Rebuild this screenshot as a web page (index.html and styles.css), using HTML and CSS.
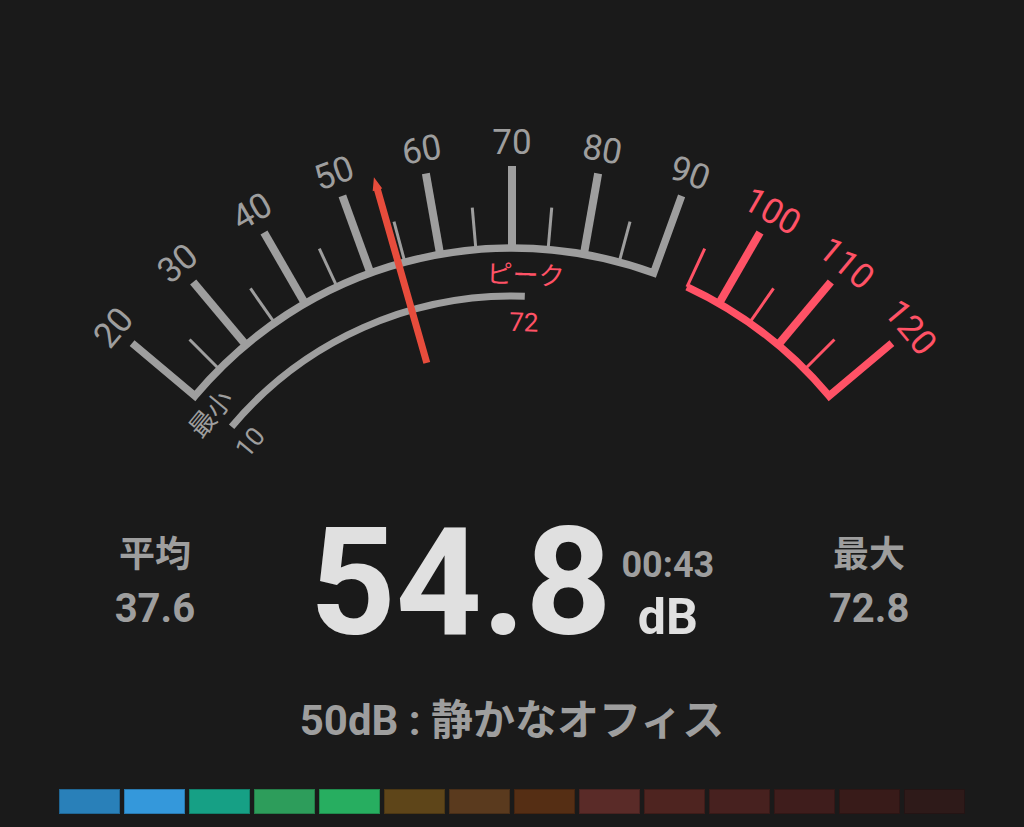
FILE: index.html
```html
<!DOCTYPE html>
<html lang="ja">
<head>
    <meta charset="UTF-8">
    <meta name="viewport" content="width=device-width, initial-scale=1.0">
    <title>騒音計</title>
    <link rel="stylesheet" href="styles.css">
</head>
<body>
    <div class="meter">
        <!-- dial: pivot at (512, 662), 1 degree per dB, 70 dB straight up -->
        <svg class="gauge" viewBox="0 0 1024 490" width="1024" height="490">
            <path class="scale" d="M132.1 343.2 L194.9 395.9 A414 414 0 0 1 653.6 273.0 L681.6 195.9"/>
            <path class="scale danger" d="M687.0 286.8 A414 414 0 0 1 829.1 395.9 L891.9 343.2"/>
            <path class="range" d="M231.6 426.7 A366 366 0 0 1 524.8 296.2"/>

            <line class="minor" x1="512" y1="248" x2="512" y2="206" transform="rotate(-45 512 662)"/>
            <line class="major" x1="512" y1="248" x2="512" y2="166" transform="rotate(-40 512 662)"/>
            <line class="minor" x1="512" y1="248" x2="512" y2="206" transform="rotate(-35 512 662)"/>
            <line class="major" x1="512" y1="248" x2="512" y2="166" transform="rotate(-30 512 662)"/>
            <line class="minor" x1="512" y1="248" x2="512" y2="206" transform="rotate(-25 512 662)"/>
            <line class="major" x1="512" y1="248" x2="512" y2="166" transform="rotate(-20 512 662)"/>
            <line class="minor" x1="512" y1="248" x2="512" y2="206" transform="rotate(-15 512 662)"/>
            <line class="major" x1="512" y1="248" x2="512" y2="166" transform="rotate(-10 512 662)"/>
            <line class="minor" x1="512" y1="248" x2="512" y2="206" transform="rotate(-5 512 662)"/>
            <line class="major" x1="512" y1="248" x2="512" y2="166"/>
            <line class="minor" x1="512" y1="248" x2="512" y2="206" transform="rotate(5 512 662)"/>
            <line class="major" x1="512" y1="248" x2="512" y2="166" transform="rotate(10 512 662)"/>
            <line class="minor" x1="512" y1="248" x2="512" y2="206" transform="rotate(15 512 662)"/>
            <line class="minor danger" x1="512" y1="248" x2="512" y2="206" transform="rotate(25 512 662)"/>
            <line class="major danger" x1="512" y1="248" x2="512" y2="166" transform="rotate(30 512 662)"/>
            <line class="minor danger" x1="512" y1="248" x2="512" y2="206" transform="rotate(35 512 662)"/>
            <line class="major danger" x1="512" y1="248" x2="512" y2="166" transform="rotate(40 512 662)"/>
            <line class="minor danger" x1="512" y1="248" x2="512" y2="206" transform="rotate(45 512 662)"/>

            <text class="num" x="512" y="142" transform="rotate(-50 512 662)">20</text>
            <text class="num" x="512" y="142" transform="rotate(-40 512 662)">30</text>
            <text class="num" x="512" y="142" transform="rotate(-30 512 662)">40</text>
            <text class="num" x="512" y="142" transform="rotate(-20 512 662)">50</text>
            <text class="num" x="512" y="142" transform="rotate(-10 512 662)">60</text>
            <text class="num" x="512" y="142">70</text>
            <text class="num" x="512" y="142" transform="rotate(10 512 662)">80</text>
            <text class="num" x="512" y="142" transform="rotate(20 512 662)">90</text>
            <text class="num danger" x="512" y="142" transform="rotate(30 512 662)">100</text>
            <text class="num danger" x="512" y="142" transform="rotate(40 512 662)">110</text>
            <text class="num danger" x="512" y="142" transform="rotate(50 512 662)">120</text>

            <text class="small" x="512" y="272" transform="rotate(-50.5 512 662)">最小</text>
            <text class="small" x="512" y="320" transform="rotate(-50 512 662)">10</text>
            <text class="small danger" x="512" y="275" transform="rotate(2 512 662)">ピーク</text>
            <text class="small danger" x="512" y="322" transform="rotate(2 512 662)">72</text>

            <polygon class="needle" points="508.5,351 515.5,351 515.5,171 517,171 512,158 507,171 508.5,171" transform="rotate(-15.9 512 662)"/>
        </svg>

        <div class="readout">
            <div class="stat">
                <div class="stat-label">平均</div>
                <div class="stat-value">37.6</div>
            </div>
            <div class="current">
                <span class="current-value">54.8</span>
                <div class="current-side">
                    <span class="elapsed">00:43</span>
                    <span class="unit">dB</span>
                </div>
            </div>
            <div class="stat">
                <div class="stat-label">最大</div>
                <div class="stat-value">72.8</div>
            </div>
        </div>

        <p class="hint">50dB : 静かなオフィス</p>

        <div class="level-bar">
            <span></span><span></span><span></span><span></span><span></span>
            <span></span><span></span><span></span><span></span><span></span>
            <span></span><span></span><span></span><span></span>
        </div>
    </div>
</body>
</html>
```

FILE: styles.css
```css
* {
    margin: 0;
    padding: 0;
    box-sizing: border-box;
}

body {
    background: #1a1a1a;
    color: #9e9e9e;
    font-family: Roboto, "Noto Sans CJK JP", sans-serif;
}

.meter {
    width: 1024px;
}

/* dial */

.gauge {
    display: block;
}

.gauge .scale,
.gauge .range {
    fill: none;
    stroke: #9e9e9e;
    stroke-width: 7.5;
}

.gauge .range {
    stroke-width: 7;
}

.gauge .major {
    stroke: #9e9e9e;
    stroke-width: 8;
}

.gauge .minor {
    stroke: #9e9e9e;
    stroke-width: 3;
}

.gauge .scale.danger,
.gauge line.danger {
    stroke: #ff5266;
}

.gauge text {
    fill: #9e9e9e;
    text-anchor: middle;
    dominant-baseline: central;
}

.gauge .num {
    font-size: 35px;
}

.gauge .small {
    font-size: 26px;
}

.gauge text.danger {
    fill: #ff5266;
}

.gauge .needle {
    fill: #e74c3c;
}

/* numbers */

.readout {
    display: grid;
    grid-template-columns: 1fr auto 1fr;
    align-items: center;
    margin-top: 18px;
}

.stat {
    text-align: center;
}

.stat-label {
    font-size: 36px;
    font-weight: 700;
    line-height: 44px;
}

.stat-value {
    font-size: 40px;
    font-weight: 700;
    line-height: 48px;
    margin-top: 8px;
}

.current {
    display: flex;
    align-items: flex-end;
}

.current-value {
    font-size: 150px;
    font-weight: 700;
    line-height: 1;
    color: #e0e0e0;
}

.current-side {
    display: flex;
    flex-direction: column;
    align-items: center;
    margin-left: 10px;
    padding-bottom: 16px;
}

.elapsed {
    font-size: 36px;
    font-weight: 700;
    line-height: 1;
    margin-bottom: 9px;
}

.unit {
    font-size: 50px;
    font-weight: 700;
    line-height: 1;
    color: #e0e0e0;
}

.hint {
    margin-top: 35px;
    text-align: center;
    font-size: 42px;
    font-weight: 700;
    line-height: 56px;
}

/* level bar */

.level-bar {
    display: grid;
    grid-template-columns: repeat(14, 1fr);
    gap: 4px;
    padding: 0 59px;
    margin-top: 40px;
}

.level-bar span {
    height: 25px;
    box-shadow: inset 0 0 0 1px rgba(0, 0, 0, 0.2);
}

.level-bar span:nth-child(1) { background: #2980b9; }
.level-bar span:nth-child(2) { background: #3498db; }
.level-bar span:nth-child(3) { background: #16a085; }
.level-bar span:nth-child(4) { background: #2d9d5b; }
.level-bar span:nth-child(5) { background: #27ae60; }
.level-bar span:nth-child(6) { background: #5e4519; }
.level-bar span:nth-child(7) { background: #5a3a1e; }
.level-bar span:nth-child(8) { background: #552e14; }
.level-bar span:nth-child(9) { background: #5a2b28; }
.level-bar span:nth-child(10) { background: #4e2420; }
.level-bar span:nth-child(11) { background: #47211f; }
.level-bar span:nth-child(12) { background: #3f1d1c; }
.level-bar span:nth-child(13) { background: #381b19; }
.level-bar span:nth-child(14) { background: #2e1a19; }
```
